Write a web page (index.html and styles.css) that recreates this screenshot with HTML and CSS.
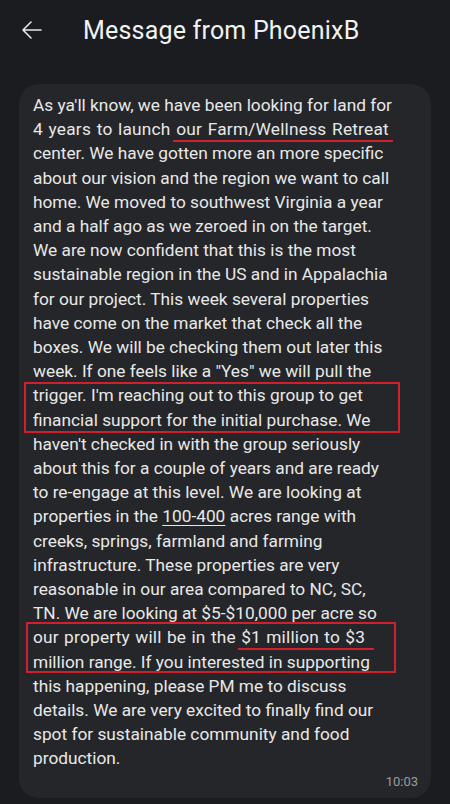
FILE: index.html
```html
<!DOCTYPE html>
<html>
<head>
<meta charset="utf-8">
<link rel="stylesheet" href="styles.css">
</head>
<body>
<header class="topbar">
  <svg class="back" width="22" height="20" viewBox="0 0 22 20"><path d="M20 10H2M10 2L2 10L10 18" fill="none" stroke="#e8e8e8" stroke-width="1.6" stroke-linecap="round" stroke-linejoin="round"/></svg>
  <h1 class="title">Message from PhoenixB</h1>
</header>
<main class="thread">
  <div class="bubble">
    <div class="msg">
      <div>As ya'll know, we have been looking for land for</div>
      <div class="wide">4 years to launch <span class="mark-u">our Farm/Wellness Retreat</span></div>
      <div>center. We have gotten more an more specific</div>
      <div>about our vision and the region we want to call</div>
      <div>home. We moved to southwest Virginia a year</div>
      <div>and a half ago as we zeroed in on the target.</div>
      <div>We are now confident that this is the most</div>
      <div>sustainable region in the US and in Appalachia</div>
      <div>for our project. This week several properties</div>
      <div>have come on the market that check all the</div>
      <div>boxes. We will be checking them out later this</div>
      <div>week. If one feels like a "Yes" we will pull the</div>
      <div class="mark-box box1">
        <div>trigger. I'm reaching out to this group to get</div>
        <div>financial support for the initial purchase. We</div>
      </div>
      <div>haven't checked in with the group seriously</div>
      <div>about this for a couple of years and are ready</div>
      <div>to re-engage at this level. We are looking at</div>
      <div>properties in the <span class="link">100-400</span> acres range with</div>
      <div>creeks, springs, farmland and farming</div>
      <div>infrastructure. These properties are very</div>
      <div>reasonable in our area compared to NC, SC,</div>
      <div>TN. We are looking at $5-$10,000 per acre so</div>
      <div class="mark-box box2">
        <div class="wide2">our property will be in the <span class="mark-u u2">$1 million to $3</span></div>
        <div>million range. If you interested in supporting</div>
      </div>
      <div>this happening, please PM me to discuss</div>
      <div>details. We are very excited to finally find our</div>
      <div>spot for sustainable community and food</div>
      <div>production.</div>
    </div>
    <div class="time">10:03</div>
  </div>
</main>
</body>
</html>
```
FILE: styles.css
```css
html, body {
  margin: 0;
  padding: 0;
  background: #1b1c20;
  width: 450px;
  height: 804px;
  overflow: hidden;
  font-family: Roboto, "Noto Sans", sans-serif;
}
.topbar {
  height: 60px;
  display: flex;
  align-items: center;
  padding-left: 21px;
  box-sizing: border-box;
}
.back {
  display: block;
  flex: none;
}
.title {
  margin: 0 0 0 40px;
  font-weight: 400;
  font-size: 25px;
  color: #f2f2f2;
  letter-spacing: 0.2px;
}
.thread {
  padding: 24px 19px 0 19px;
}
.bubble {
  background: #252629;
  border-radius: 20px;
  padding: 9px 13px 8px 14px;
}
.msg {
  font-size: 17.3px;
  line-height: 24.2px;
  color: #e8e8e8;
  white-space: nowrap;
}
.wide {
  word-spacing: 1.2px;
  letter-spacing: 0.2px;
}
.wide2 {
  letter-spacing: 0.2px;
  word-spacing: 0.8px;
}
.mark-u {
  position: relative;
}
.mark-u::after {
  content: "";
  position: absolute;
  left: -3px;
  right: -4px;
  bottom: -3px;
  height: 2.5px;
  background: #d0202e;
}
.mark-u.u2::after {
  right: -9px;
}
.mark-box {
  position: relative;
}
.mark-box::after {
  content: "";
  position: absolute;
  border: 2px solid #d0202e;
  pointer-events: none;
}
.box1::after {
  left: -9px;
  top: -1px;
  width: 372px;
  height: 47px;
}
.box2::after {
  left: -7px;
  top: -3px;
  width: 366px;
  height: 47px;
}
.link {
  text-decoration: underline;
  text-decoration-thickness: 1px;
  text-underline-offset: 3px;
}
.time {
  text-align: right;
  font-size: 13px;
  color: #9b9b9f;
  line-height: 16px;
  margin-top: 3px;
}
```
